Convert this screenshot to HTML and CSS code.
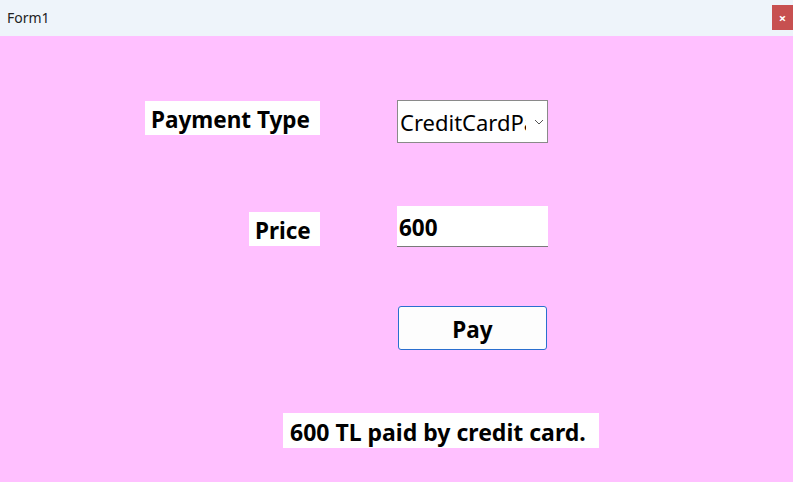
FILE: index.html
```html
<!DOCTYPE html>
<html>
<head>
<meta charset="utf-8">
<link rel="stylesheet" href="styles.css">
</head>
<body>
<div class="window">
  <div class="titlebar">
    <span class="title">Form1</span>
    <span class="close">×</span>
  </div>
  <div class="form">
    <div class="grid">
      <div class="label label-type">Payment Type</div>
      <div class="combo"><span class="combo-text">CreditCardPayment</span><svg class="chev" width="10" height="6" viewBox="0 0 10 6"><path d="M1 1 L5 5 L9 1" fill="none" stroke="#555" stroke-width="1"/></svg></div>
      <div class="label label-price">Price</div>
      <div class="textbox">600</div>
      <div></div>
      <button class="pay">Pay</button>
    </div>
    <div class="result">600 TL paid by credit card.</div>
  </div>
</div>
</body>
</html>
```
FILE: styles.css
```css
html, body {
  margin: 0;
  padding: 0;
  width: 793px;
  height: 482px;
  overflow: hidden;
  font-family: "Noto Sans", "Open Sans", sans-serif;
}
.window {
  display: flex;
  flex-direction: column;
  height: 482px;
}
.titlebar {
  height: 36px;
  background: #eef4fa;
  display: flex;
  align-items: center;
  justify-content: space-between;
  flex: none;
}
.title {
  font-size: 14px;
  color: #222;
  padding-left: 7px;
  padding-bottom: 1px;
}
.close {
  width: 21px;
  height: 25px;
  background: #c75050;
  color: #fff;
  font-size: 13px;
  font-weight: 700;
  display: flex;
  align-items: center;
  justify-content: center;
  margin-bottom: 1px;
}
.form {
  flex: 1;
  background: #ffc0ff;
  padding-top: 64px;
}
.grid {
  display: grid;
  grid-template-columns: 320px 151px;
  grid-template-rows: 106px 100px 44px;
  column-gap: 77px;
  align-items: start;
}
.label {
  background: #fff;
  font-weight: 700;
  font-size: 22.5px;
  color: #000;
  justify-self: end;
  height: 34px;
  line-height: 38px;
  box-sizing: border-box;
  white-space: nowrap;
  overflow: visible;
}
.label-type {
  width: 175px;
  padding-left: 6px;
  margin-top: 1px;
}
.label-price {
  width: 71px;
  padding-left: 6px;
  margin-top: 6px;
}
.combo {
  box-sizing: border-box;
  height: 43px;
  border: 1px solid #8a8a8a;
  background: #fff;
  display: flex;
  align-items: center;
  overflow: hidden;
}
.combo-text {
  font-size: 22px;
  padding-left: 2px;
  width: 126px;
  overflow: hidden;
  white-space: nowrap;
  color: #000;
}
.chev {
  margin-left: 8px;
}
.textbox {
  box-sizing: border-box;
  height: 41px;
  background: #fff;
  border-bottom: 1px solid #7a7a7a;
  font-weight: 700;
  font-size: 22.5px;
  line-height: 44px;
  padding-left: 2px;
  color: #000;
}
.pay {
  box-sizing: border-box;
  margin-left: 1px;
  width: 149px;
  height: 44px;
  background: #fdfdfd;
  border: 1px solid #2a6fcf;
  border-radius: 3px;
  font-family: "Noto Sans", "Open Sans", sans-serif;
  font-weight: 700;
  font-size: 22.5px;
  color: #000;
  padding: 2px 0 0 0;
}
.result {
  margin-top: 63px;
  margin-left: 283px;
  width: 316px;
  height: 35px;
  box-sizing: border-box;
  background: #fff;
  font-weight: 700;
  font-size: 23px;
  line-height: 39px;
  padding-left: 7px;
  color: #000;
  white-space: nowrap;
}
```
